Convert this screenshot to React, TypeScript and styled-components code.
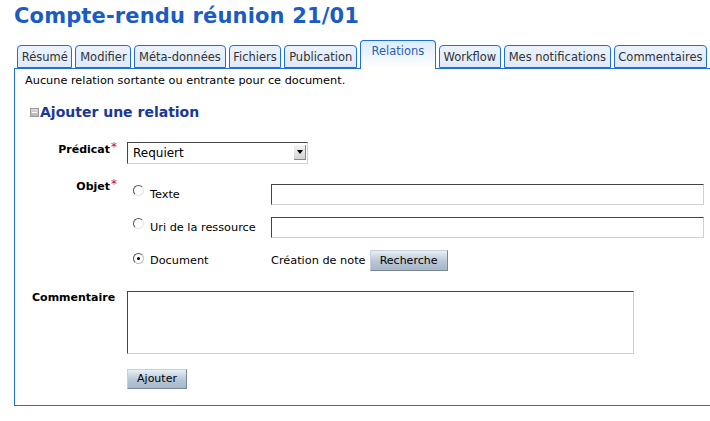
import React from "react";
import styled, { createGlobalStyle } from "styled-components";

const GlobalStyle = createGlobalStyle`
  html, body {
    margin: 0;
    padding: 0;
    background: #ffffff;
    overflow: hidden;
  }
  body {
    font-family: "DejaVu Sans", Verdana, sans-serif;
    color: #000;
  }
`;

const Page = styled.div`
  box-sizing: border-box;
  width: 710px;
  padding: 3px 0 0 14px;
`;

const Title = styled.h1`
  margin: 0;
  font-size: 21px;
  line-height: 26px;
  font-weight: bold;
  color: #1a5cc6;
  letter-spacing: 0.15px;
`;

const TabBar = styled.ul`
  list-style: none;
  margin: 11px 0 0 0;
  padding: 0 0 0 3px;
  display: flex;
  align-items: flex-end;
  gap: 3px;
  height: 28px;
  position: relative;
  z-index: 1;
`;

const Tab = styled.li<{ $active?: boolean }>`
  box-sizing: border-box;
  flex-shrink: 0;
  height: ${(p) => (p.$active ? "29px" : "23px")};
  margin-bottom: ${(p) => (p.$active ? "-1px" : "0")};
  padding: ${(p) => (p.$active ? "3px 10.5px 0" : "4px 3.7px 0")};
  border: 1px solid #1f6fd6;
  border-bottom: ${(p) => (p.$active ? "none" : "1px solid #1f6fd6")};
  border-radius: 4px 4px 0 0;
  background: ${(p) =>
    p.$active
      ? "linear-gradient(#dcebfc, #ffffff)"
      : "linear-gradient(#eaf2fd, #dfeafa)"};
  font-size: 11.5px;
  line-height: 14px;
  color: ${(p) => (p.$active ? "#2a5dad" : "#333")};
  white-space: nowrap;
`;

const Panel = styled.div`
  box-sizing: border-box;
  border: 1px solid #1f6fd6;
  border-right: none;
  height: 338px;
  padding: 5px 0 0 10px;
`;

const Notice = styled.p`
  margin: 0;
  font-size: 11.3px;
  line-height: 14px;
`;

const SectionHead = styled.h2`
  margin: 15px 0 0 5px;
  display: flex;
  align-items: center;
  gap: 1px;
  font-size: 14px;
  line-height: 18px;
  font-weight: bold;
  color: #1b3797;
`;

const CollapseIcon = styled.span`
  box-sizing: border-box;
  width: 9px;
  height: 9px;
  border: 1px solid #9a9a9a;
  background: linear-gradient(#dcdcdc, #b4b4b4);
  display: flex;
  align-items: center;
  justify-content: center;
  &::after {
    content: "";
    width: 5px;
    height: 1px;
    background: #ffffff;
  }
`;

const Form = styled.div`
  display: grid;
  grid-template-columns: 92px 1fr;
  column-gap: 10px;
  margin-top: 21px;
`;

const Label = styled.div<{ $shift?: number; $left?: boolean }>`
  text-align: ${(p) => (p.$left ? "left" : "right")};
  padding-left: ${(p) => (p.$left ? "7px" : "0")};
  margin-top: ${(p) => p.$shift ?? 0}px;
  font-size: 11px;
  font-weight: bold;
  line-height: 14px;
`;

const Star = styled.span`
  color: #c81010;
  font-weight: normal;
  font-size: 12px;
  vertical-align: 2px;
  margin-left: 1px;
`;

const Field = styled.div<{ $mb?: number }>`
  margin-bottom: ${(p) => p.$mb ?? 0}px;
`;

const SelectWrap = styled.div`
  position: relative;
  width: 181px;
  height: 22px;
`;

const Select = styled.select`
  appearance: none;
  box-sizing: border-box;
  width: 100%;
  height: 100%;
  margin: 0;
  padding: 0 0 0 5px;
  border: 1px solid;
  border-color: #444 #d0d0d0 #d0d0d0 #444;
  background: #fff;
  font-family: "DejaVu Sans", Verdana, sans-serif;
  font-size: 12px;
  color: #000;
`;

const Arrow = styled.span`
  position: absolute;
  right: 2px;
  top: 3px;
  width: 12px;
  height: 15px;
  box-sizing: border-box;
  background: linear-gradient(#f4f4f4, #d4d4d4);
  border-right: 1px solid #888;
  border-bottom: 1px solid #888;
  display: flex;
  align-items: center;
  justify-content: center;
  pointer-events: none;
  &::after {
    content: "";
    border-left: 3px solid transparent;
    border-right: 3px solid transparent;
    border-top: 4px solid #000;
  }
`;

const ChoiceGrid = styled.div`
  display: grid;
  grid-template-columns: 144px 433px;
  row-gap: 12px;
  padding-top: 1px;
  align-items: center;
`;

const Choice = styled.label`
  display: flex;
  align-items: center;
  gap: 6px;
  padding-left: 6px;
  font-size: 11.3px;
  line-height: 14px;
`;

const Radio = styled.input.attrs({ type: "radio" })`
  appearance: none;
  margin: 0;
  width: 11px;
  height: 11px;
  border-radius: 50%;
  box-sizing: border-box;
  border: 1px solid;
  border-color: #555 #e6e6e6 #e6e6e6 #555;
  background: #fff;
  position: relative;
  top: -4px;
  &:checked {
    border-color: #555 #bbb #bbb #555;
    top: -2px;
  }
  &:checked::after {
    content: "";
    position: absolute;
    left: 3px;
    top: 3px;
    width: 3px;
    height: 3px;
    border-radius: 50%;
    background: #000;
  }
`;

const TextInput = styled.input`
  box-sizing: border-box;
  width: 433px;
  height: 21px;
  margin: 0;
  border: 1px solid;
  border-color: #444 #d0d0d0 #d0d0d0 #444;
  background: #fff;
`;

const Inline = styled.div`
  display: flex;
  align-items: center;
  gap: 4px;
  font-size: 11.3px;
`;

const Button = styled.button<{ $w: number; $h?: number }>`
  box-sizing: border-box;
  width: ${(p) => p.$w}px;
  height: ${(p) => p.$h ?? 21}px;
  margin: 0;
  padding: 0;
  border: 1px solid;
  border-color: #c8d0d8 #7a8794 #7a8794 #c8d0d8;
  background: linear-gradient(#e8eef5, #b8c6d6 55%, #a7b7c9);
  font-family: "DejaVu Sans", Verdana, sans-serif;
  font-size: 11px;
  color: #000;
`;

const TextArea = styled.textarea`
  display: block;
  box-sizing: border-box;
  width: 507px;
  height: 63px;
  margin: 0;
  resize: none;
  border: 1px solid;
  border-color: #444 #d0d0d0 #d0d0d0 #444;
  background: #fff;
`;

const tabs = [
  "Résumé",
  "Modifier",
  "Méta-données",
  "Fichiers",
  "Publication",
  "Relations",
  "Workflow",
  "Mes notifications",
  "Commentaires",
];

export default function App() {
  return (
    <Page>
      <GlobalStyle />
      <Title>Compte-rendu réunion 21/01</Title>
      <TabBar>
        {tabs.map((t) => (
          <Tab key={t} $active={t === "Relations"}>
            {t}
          </Tab>
        ))}
      </TabBar>
      <Panel>
        <Notice>Aucune relation sortante ou entrante pour ce document.</Notice>
        <SectionHead>
          <CollapseIcon />
          Ajouter une relation
        </SectionHead>
        <Form>
          <Label $shift={-2}>
            Prédicat<Star>*</Star>
          </Label>
          <Field $mb={19}>
            <SelectWrap>
              <Select defaultValue="req">
                <option value="req">Requiert</option>
              </Select>
              <Arrow />
            </SelectWrap>
          </Field>

          <Label $shift={-6}>
            Objet<Star>*</Star>
          </Label>
          <Field $mb={20}>
            <ChoiceGrid>
              <Choice>
                <Radio name="obj" />
                Texte
              </Choice>
              <TextInput />
              <Choice>
                <Radio name="obj" />
                Uri de la ressource
              </Choice>
              <TextInput />
              <Choice>
                <Radio name="obj" defaultChecked />
                Document
              </Choice>
              <Inline>
                Création de note
                <Button $w={78}>Recherche</Button>
              </Inline>
            </ChoiceGrid>
          </Field>

          <Label $left>Commentaire</Label>
          <Field $mb={13}>
            <TextArea />
          </Field>

          <div />
          <Field>
            <Button $w={60} $h={20}>
              Ajouter
            </Button>
          </Field>
        </Form>
      </Panel>
    </Page>
  );
}
